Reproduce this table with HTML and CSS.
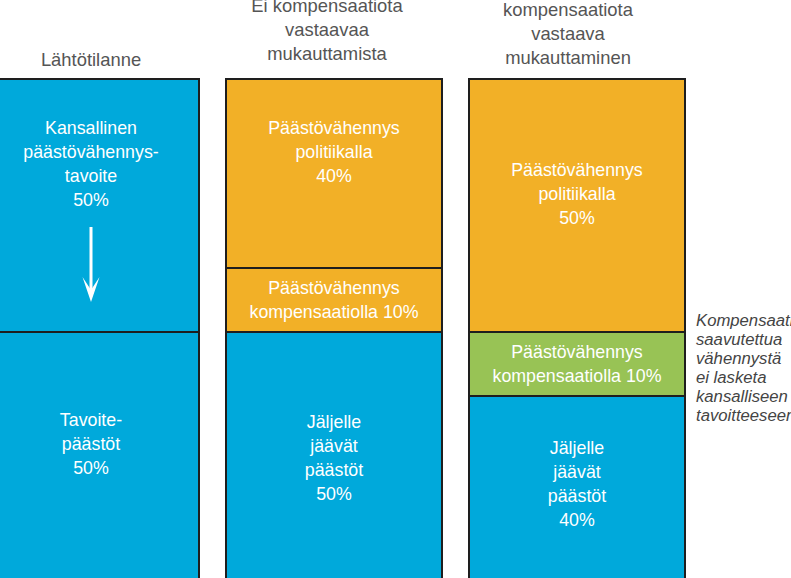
FILE: index.html
```html
<!DOCTYPE html>
<html lang="fi">
<head>
<meta charset="utf-8">
<title>Päästövähennys</title>
<link rel="stylesheet" href="styles.css">
</head>
<body>
<div class="chart">
  <div class="col">
    <div class="head head-1">Lähtötilanne</div>
    <div class="box">
      <div class="seg blue tall pad-36">
        Kansallinen<br>päästövähennys-<br>tavoite<br>50%
        <svg class="arrow" width="20" height="76" viewBox="0 0 20 76" aria-hidden="true">
          <rect x="8.5" y="0" width="3" height="64" fill="#fff"/>
          <polygon points="1.5,50 10,75 18.5,50 10,63" fill="#fff"/>
        </svg>
      </div>
      <div class="seg blue rest pad-75">Tavoite-<br>päästöt<br>50%</div>
    </div>
  </div>
  <div class="col">
    <div class="head head-2">Ei kompensaatiota<br>vastaavaa<br>mukauttamista</div>
    <div class="box">
      <div class="seg orange mid pad-36">Päästövähennys<br>politiikalla<br>40%</div>
      <div class="seg orange short">Päästövähennys<br>kompensaatiolla 10%</div>
      <div class="seg blue rest pad-77">Jäljelle<br>jäävät<br>päästöt<br>50%</div>
    </div>
  </div>
  <div class="col">
    <div class="head head-3">Tavoitteen<br>kompensaatiota<br>vastaava<br>mukauttaminen</div>
    <div class="box">
      <div class="seg orange tall pad-78">Päästövähennys<br>politiikalla<br>50%</div>
      <div class="seg green short">Päästövähennys<br>kompensaatiolla 10%</div>
      <div class="seg blue rest pad-39">Jäljelle<br>jäävät<br>päästöt<br>40%</div>
    </div>
  </div>
  <p class="note">Kompensaatiolla<br>saavutettua<br>vähennystä<br>ei lasketa<br>kansalliseen<br>tavoitteeseen</p>
</div>
</body>
</html>
```
FILE: styles.css
```css
html, body {
  margin: 0;
  padding: 0;
  overflow: hidden;
  background: #ffffff;
}
body {
  font-family: "Liberation Sans", Arial, sans-serif;
}
.chart {
  display: flex;
  align-items: flex-start;
  margin-top: -30px;
  margin-left: -18px;
}
.col {
  width: 218px;
  flex: none;
}
.col + .col {
  margin-left: 25px;
}
.head {
  box-sizing: border-box;
  height: 108px;
  display: flex;
  flex-direction: column;
  justify-content: flex-end;
  text-align: center;
  color: #555555;
  font-size: 18.4px;
  line-height: 24px;
}
.head-1 { padding-bottom: 6px; }
.head-2 { padding: 0 14px 12px 0; }
.head-3 { padding: 0 18px 8px 0; }
.box {
  border: 2px solid #1e1e1e;
  border-bottom: none;
  color: #ffffff;
  font-size: 17.8px;
  line-height: 24px;
  text-align: center;
}
.seg {
  box-sizing: border-box;
}
.seg + .seg {
  border-top: 2px solid #1e1e1e;
}
.blue { background: #00a9db; }
.orange { background: #f2b027; }
.green { background: #98c355; }
.tall { height: 251px; }
.mid { height: 187px; }
.short {
  height: 64px;
  display: flex;
  flex-direction: column;
  justify-content: center;
}
.rest { height: 320px; }
.pad-36 { padding-top: 36px; }
.pad-39 { padding-top: 39px; }
.pad-75 { padding-top: 75px; }
.pad-77 { padding-top: 77px; }
.pad-78 { padding-top: 78px; }
.arrow {
  display: block;
  margin: 15px auto 0;
}
.note {
  margin: 341px 0 0 10px;
  font-style: italic;
  font-size: 16.7px;
  line-height: 19px;
  color: #444444;
  white-space: nowrap;
}
```
